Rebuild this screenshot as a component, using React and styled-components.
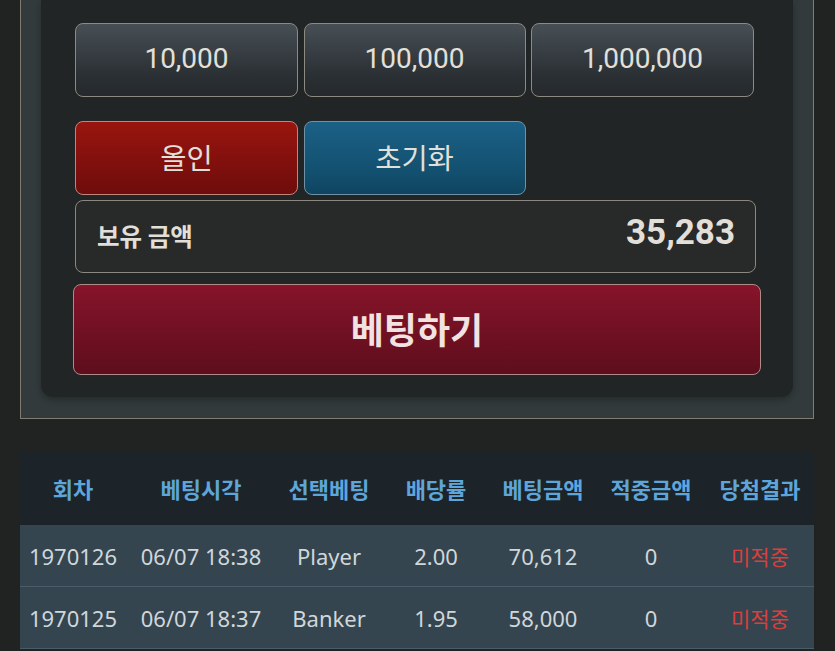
import React from "react";
import styled, { createGlobalStyle } from "styled-components";

const GlobalStyle = createGlobalStyle`
  html, body {
    margin: 0;
    padding: 0;
    background: #212323;
  }
  * {
    box-sizing: border-box;
  }
`;

const amounts = ["10,000", "100,000", "1,000,000"];

const history = [
  {
    round: "1970126",
    time: "06/07 18:38",
    pick: "Player",
    odds: "2.00",
    bet: "70,612",
    win: "0",
    result: "미적중",
  },
  {
    round: "1970125",
    time: "06/07 18:37",
    pick: "Banker",
    odds: "1.95",
    bet: "58,000",
    win: "0",
    result: "미적중",
  },
];

const headers = ["회차", "베팅시각", "선택베팅", "배당률", "베팅금액", "적중금액", "당첨결과"];

function App() {
  return (
    <Page>
      <GlobalStyle />
      <Frame>
        <Panel>
          <ButtonGrid>
            {amounts.map((a) => (
              <ChipButton key={a} $size={28}>
                {a}
              </ChipButton>
            ))}
            <ChipButton $variant="red" $size={28.5}>
              올인
            </ChipButton>
            <ChipButton $variant="blue" $size={28.5}>
              초기화
            </ChipButton>
          </ButtonGrid>
          <Balance>
            <span>보유 금액</span>
            <strong>35,283</strong>
          </Balance>
          <BetButton>베팅하기</BetButton>
        </Panel>
      </Frame>

      <Table>
        <HeadRow>
          {headers.map((h) => (
            <HeadCell key={h}>{h}</HeadCell>
          ))}
        </HeadRow>
        {history.map((row) => (
          <BodyRow key={row.round}>
            <Cell>{row.round}</Cell>
            <Cell>{row.time}</Cell>
            <Cell>{row.pick}</Cell>
            <Cell>{row.odds}</Cell>
            <Cell>{row.bet}</Cell>
            <Cell>{row.win}</Cell>
            <Cell $lose>{row.result}</Cell>
          </BodyRow>
        ))}
      </Table>
    </Page>
  );
}

export default App;

const Page = styled.div`
  width: 835px;
  height: 651px;
  overflow: hidden;
  padding: 0 21px 0 20px;
  font-family: "Noto Sans", "Noto Sans CJK KR", sans-serif;
`;

const Frame = styled.div`
  width: 794px;
  background: #323a3c;
  border: 1px solid #7f7c74;
  border-top: none;
  padding: 0 20px 21px 20px;
`;

const Panel = styled.div`
  background: #212526;
  border-radius: 0 0 12px 12px;
  box-shadow: 0 3px 6px rgba(0, 0, 0, 0.25);
  padding: 23px 37px 22px 34px;
  display: flex;
  flex-direction: column;
`;

const ButtonGrid = styled.div`
  display: grid;
  grid-template-columns: 223px 222px 223px;
  column-gap: 5.5px;
  row-gap: 24px;
`;

const variants = {
  gray: {
    bg: "linear-gradient(to bottom, #474f55 0%, #2b3034 70%, #25292c 100%)",
    border: "#8c8a82",
  },
  red: {
    bg: "linear-gradient(to bottom, #99150f 0%, #7b0f0d 70%, #6e0c0c 100%)",
    border: "#c0857c",
  },
  blue: {
    bg: "linear-gradient(to bottom, #1b6086 0%, #13506f 70%, #0f4460 100%)",
    border: "#6f93a5",
  },
};

const ChipButton = styled.div`
  height: 74px;
  border-radius: 8px;
  border: 1.5px solid ${({ $variant = "gray" }) => variants[$variant].border};
  background: ${({ $variant = "gray" }) => variants[$variant].bg};
  color: #e2e0da;
  font-family: "Roboto", "Noto Sans CJK KR", sans-serif;
  font-size: ${({ $size }) => $size}px;
  display: flex;
  align-items: center;
  justify-content: center;
  padding-bottom: 3px;
`;

const Balance = styled.div`
  margin-top: 5px;
  width: 681px;
  height: 73px;
  border: 1.5px solid #8a887f;
  border-radius: 8px;
  background: #282a29;
  display: flex;
  align-items: center;
  justify-content: space-between;
  padding: 0 20px 8px 21px;
  color: #e2dfd8;

  > span {
    font-family: "Noto Sans CJK KR", sans-serif;
    font-weight: 700;
    font-size: 24.5px;
    margin-top: 6px;
  }
  > strong {
    font-family: "Roboto", sans-serif;
    font-weight: 700;
    font-size: 35px;
  }
`;

const BetButton = styled.div`
  margin: 11px -5px 0 -2px;
  height: 91px;
  border-radius: 8px;
  border: 1.5px solid #b08a86;
  background: linear-gradient(to bottom, #86142b 0%, #6e1021 60%, #5d0e1d 100%);
  color: #f2e2e2;
  font-family: "Noto Sans CJK KR", sans-serif;
  font-weight: 700;
  font-size: 36px;
  display: flex;
  align-items: center;
  justify-content: center;
  padding-bottom: 4px;
`;

const Table = styled.div`
  margin-top: 33px;
  width: 794px;
`;

const columns = "106px 150px 106px 108px 106px 110px 108px";

const HeadRow = styled.div`
  display: grid;
  grid-template-columns: ${columns};
  height: 73px;
  background: #1c2329;
  align-items: center;
`;

const HeadCell = styled.div`
  text-align: center;
  color: #5ea6da;
  font-family: "Noto Sans CJK KR", sans-serif;
  font-weight: 700;
  font-size: 22px;
  padding-bottom: 1px;
`;

const BodyRow = styled.div`
  display: grid;
  grid-template-columns: ${columns};
  height: 62px;
  background: #35454f;
  border-bottom: 1px solid #4a5c69;
  align-items: center;
`;

const Cell = styled.div`
  text-align: center;
  color: ${({ $lose }) => ($lose ? "#d8403e" : "#cfd7db")};
  font-family: "Noto Sans", "Noto Sans CJK KR", sans-serif;
  font-size: ${({ $lose }) => ($lose ? "21px" : "22px")};
`;
